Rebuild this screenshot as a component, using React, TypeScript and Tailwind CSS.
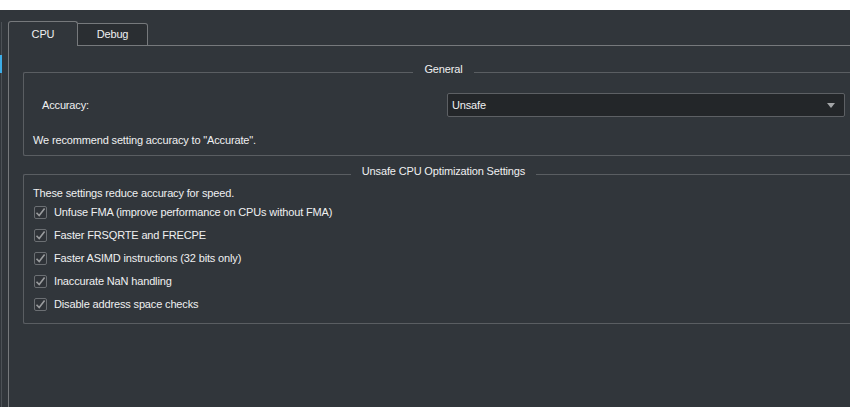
import React from "react";

const font = { fontFamily: '"Liberation Sans", Arial, sans-serif', letterSpacing: "-0.15px" };

const CheckRow = ({ label }: { label: string }) => {
  return (
    <div className="flex items-center h-[23px] pl-px">
      <div className="w-[13px] h-[13px] border border-[#6b6f73] rounded-[2px] bg-[#2f3338] flex items-center justify-center">
        <svg width="11" height="11" viewBox="0 0 11 11">
          <path d="M1.5 5.8 L4.2 8.6 L9.6 1.6" fill="none" stroke="#9a9c9e" strokeWidth="1.6" />
        </svg>
      </div>
      <span className="ml-[7px]">{label}</span>
    </div>
  );
};

const GroupBox = ({
  title,
  className,
  children,
}: {
  title: string;
  className?: string;
  children: React.ReactNode;
}) => {
  return (
    <fieldset
      className={
        "w-[840px] border-l border-t border-b border-[#5a5e62] rounded-[2px] " +
        (className ?? "")
      }
    >
      <legend className="mx-auto px-[11px] leading-[14px] pb-[6px] text-[#eff0f1]">
        {title}
      </legend>
      {children}
    </fieldset>
  );
};

export default function App() {
  const checks = [
    "Unfuse FMA (improve performance on CPUs without FMA)",
    "Faster FRSQRTE and FRECPE",
    "Faster ASIMD instructions (32 bits only)",
    "Inaccurate NaN handling",
    "Disable address space checks",
  ];

  return (
    <div
      className="w-[850px] h-[407px] overflow-hidden bg-[#31363b] text-[#eff0f1] text-[11px] flex flex-col"
      style={font}
    >
      <div className="h-[10px] bg-white shrink-0" />
      <div className="flex flex-1 min-h-0">
        {/* left side strip */}
        <div className="w-[8px] flex flex-col shrink-0">
          <div className="h-[12px]" />
          <div className="ml-px w-px h-[33px] bg-[#4c5156]" />
          <div className="w-[2px] h-[18px] bg-[#3daee9]" />
          <div className="ml-px w-px flex-1 bg-[#4c5156]" />
        </div>

        {/* tab widget */}
        <div className="flex-1 flex flex-col pt-[11px] min-w-0">
          <div className="flex items-end">
            <div className="w-[70px] h-[25px] border-l border-t border-r border-[#76797c] rounded-t-[3px] bg-[#31363b] flex items-center justify-center">
              CPU
            </div>
            <div className="w-[70px] h-[23px] border-t border-r border-b border-[#76797c] rounded-tr-[3px] bg-[#2a2e32] flex items-center justify-center">
              Debug
            </div>
            <div className="flex-1 border-b border-[#76797c]" />
          </div>

          <div className="flex-1 border-l border-[#76797c] pl-[14px] pt-[16px]">
            <GroupBox title="General">
              <div className="pt-[11px] pl-[9px] pb-[7px]">
                <div className="flex items-center h-[24px]">
                  <div className="w-[414px] pl-[9px]">Accuracy:</div>
                  <div className="w-[398px] h-[24px] border border-[#5d6064] rounded-[2px] bg-[#232629] flex items-center pl-[4px] pr-[9px]">
                    <span className="flex-1">Unsafe</span>
                    <svg width="8" height="5" viewBox="0 0 8 5">
                      <path d="M0 0 H8 L4 5 Z" fill="#a3a5a7" />
                    </svg>
                  </div>
                </div>
                <div className="mt-[15px] leading-[16px]">
                  We recommend setting accuracy to "Accurate".
                </div>
              </div>
            </GroupBox>

            <GroupBox title="Unsafe CPU Optimization Settings" className="mt-[8px]">
              <div className="pt-px pl-[9px] pb-[7px]">
                <div className="leading-[16px]">These settings reduce accuracy for speed.</div>
                {checks.map((c) => (
                  <CheckRow key={c} label={c} />
                ))}
              </div>
            </GroupBox>
          </div>
        </div>
      </div>
    </div>
  );
}
